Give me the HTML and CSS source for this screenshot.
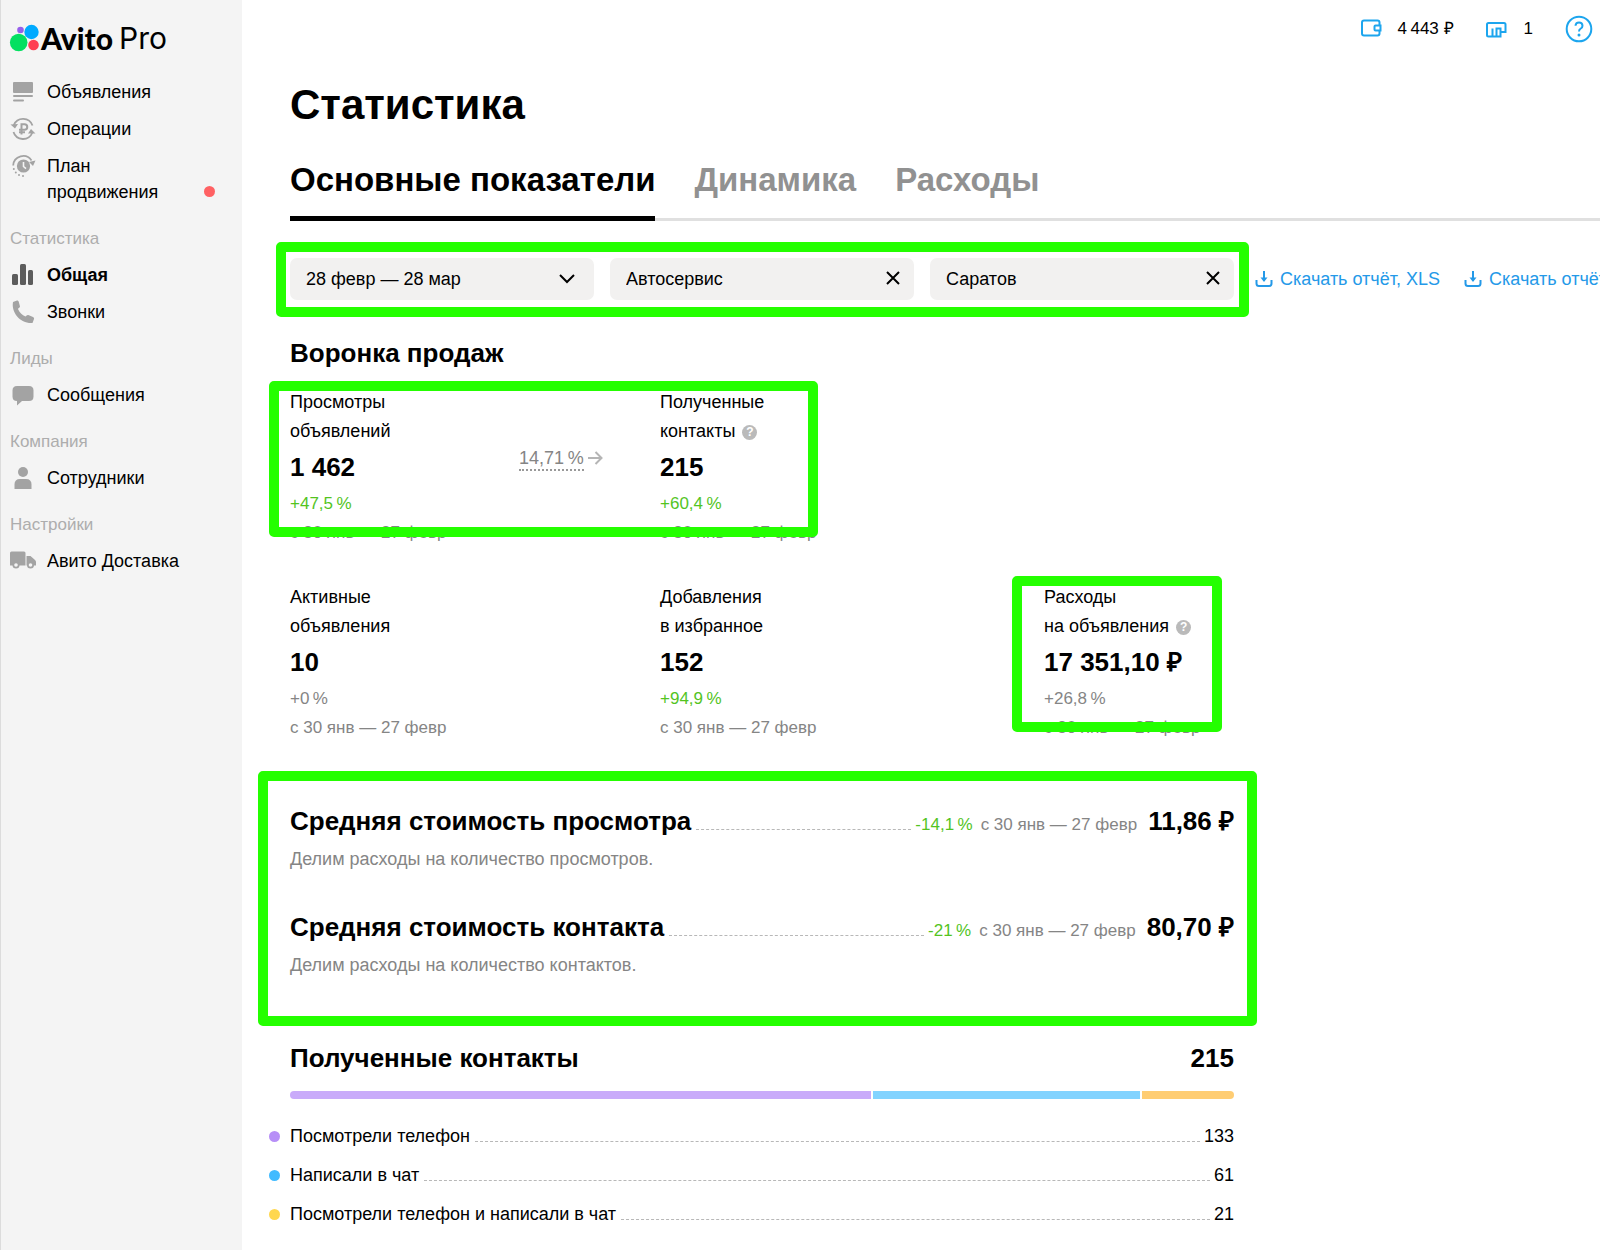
FILE: index.html
```html
<!DOCTYPE html>
<html lang="ru">
<head>
<meta charset="utf-8">
<meta name="viewport" content="width=device-width, initial-scale=1">
<title>Статистика — Avito Pro</title>
<link rel="stylesheet" href="styles.css">
</head>
<body>
<div class="layout">
  <aside class="sidebar">
    <a class="logo" href="#" aria-label="Avito Pro">
      <svg class="logo-mark" viewBox="0 0 30 28" aria-hidden="true">
        <circle cx="8.700" cy="18.500" r="8.800" fill="#04e061"/>
        <circle cx="10.500" cy="6" r="3.300" fill="#965eeb"/>
        <circle cx="21.500" cy="8" r="7.200" fill="#00aaff"/>
        <circle cx="23.500" cy="21" r="5.300" fill="#ff4053"/>
      </svg>
      <span class="logo-name">Avito</span>
      <span class="logo-pro">Pro</span>
    </a>
    <nav class="nav" aria-label="Основное меню">
      <a class="nav-item" href="#">
        <svg class="nav-icon" viewBox="0 0 26 26" aria-hidden="true"><rect x="3" y="3" width="20" height="11" rx="1"/><rect x="3" y="16" width="20" height="2" rx="1"/><rect x="3" y="20.500" width="11" height="2" rx="1"/></svg>
        <span>Объявления</span>
      </a>
      <a class="nav-item" href="#">
        <svg class="nav-icon" viewBox="0 0 26 26" aria-hidden="true"><g fill="none" stroke="currentColor" stroke-width="1.800"><path d="M3.800 9A10 10 0 0 1 22.500 9.500"/><path d="M22.200 17A10 10 0 0 1 3.500 16"/><path d="M11.500 18.500V8.300h3a2.700 2.700 0 0 1 0 5.500H9M9 16.200h6" stroke-width="2"/></g><path d="M.5 8.500l4.500 4 3-4.500zM25.500 17.500l-4.500-4.500-3 4.500z"/></svg>
        <span>Операции</span>
      </a>
      <a class="nav-item" href="#">
        <svg class="nav-icon" viewBox="0 0 26 26" aria-hidden="true"><path d="M3.200 12.500A10 10 0 0 1 21.500 7.500" fill="none" stroke="currentColor" stroke-width="1.800"/><path d="M19 9l6.500-1.500-2.500 5.500z"/><circle cx="13.500" cy="13" r="6.600"/><path d="M13.500 9v4.500l2.500 2.200" fill="none" stroke="#f4f4f4" stroke-width="1.600"/><circle cx="3.800" cy="16" r="1"/><circle cx="5.800" cy="19.500" r="1"/><circle cx="9" cy="22" r="1"/><circle cx="13" cy="23" r="1"/></svg>
        <span>План продвижения</span>
        <i class="nav-dot"></i>
      </a>
      <h2 class="nav-title">Статистика</h2>
      <a class="nav-item is-active" href="#" aria-current="page">
        <svg class="nav-icon" viewBox="0 0 26 26" aria-hidden="true"><rect x="2" y="12" width="6" height="11" rx="1.500"/><rect x="10" y="2" width="6" height="21" rx="1.500"/><rect x="18" y="8" width="5" height="15" rx="1.500"/></svg>
        <span>Общая</span>
      </a>
      <a class="nav-item" href="#">
        <svg class="nav-icon" viewBox="0 0 26 26" aria-hidden="true"><path d="M3 3l4-1.500c1 0 1.500.5 1.800 1.500l1.200 4.500c0 1-1.500 1.500-2 2.500 1.500 3.500 4 6 7.500 7.500 1-.8 1.500-1.800 2.800-1.500l4.700 2c1 .5 1.300 1.200 1 2L22.500 24C11 25 1 14 3 3z"/></svg>
        <span>Звонки</span>
      </a>
      <h2 class="nav-title">Лиды</h2>
      <a class="nav-item" href="#">
        <svg class="nav-icon" viewBox="0 0 26 26" aria-hidden="true"><path d="M7 4h12q4.500 0 4.500 4.500v6q0 4.500-4.500 4.500h-7l-5 4.500V19q-4.500 0-4.500-4.500v-6Q2.500 4 7 4z"/></svg>
        <span>Сообщения</span>
      </a>
      <h2 class="nav-title">Компания</h2>
      <a class="nav-item" href="#">
        <svg class="nav-icon" viewBox="0 0 26 26" aria-hidden="true"><circle cx="13" cy="7" r="5"/><path d="M4.500 24v-4.500q0-5.500 5.500-5.500h6q5.500 0 5.500 5.500V24z"/></svg>
        <span>Сотрудники</span>
      </a>
      <h2 class="nav-title">Настройки</h2>
      <a class="nav-item" href="#">
        <svg class="nav-icon" viewBox="0 0 26 26" aria-hidden="true"><path d="M0 5q0-1.500 1.500-1.500h12.500q1.500 0 1.500 1.500V17.500H0z"/><path d="M16.500 8h4L25 12q1 1 1 2v3.500h-9.500z"/><circle cx="6" cy="17" r="3.500"/><circle cx="20.500" cy="17" r="3.500"/><circle cx="6" cy="17" r="1.800" fill="#f4f4f4"/><circle cx="20.500" cy="17" r="1.800" fill="#f4f4f4"/></svg>
        <span>Авито Доставка</span>
      </a>
    </nav>
  </aside>

  <main class="main">
    <header class="topbar">
      <a class="balance" href="#">
        <svg class="top-icon" viewBox="0 0 22 20" aria-hidden="true"><path d="M19.500 6V3.500q0-2-2-2H4q-2 0-2 2v11q0 2 2 2h13.500q2 0 2-2V12M20.500 6.500h-5q-1 0-1 1v3q0 1 1 1h5z"/></svg>
        <span>4&#8201;443&nbsp;₽</span>
      </a>
      <a class="balance" href="#">
        <svg class="top-icon" viewBox="0 0 22 20" aria-hidden="true"><path d="M3.500 4h14.500q1.500 0 1.500 1.500V13h-5v4.500H2.500Q1 17.500 1 16V5.500Q1 4 2.500 4zM6.500 17V9.500M10.500 17V9.500h4V13"/></svg>
        <span>1</span>
      </a>
      <button class="help" type="button" aria-label="Помощь">
        <svg viewBox="0 0 28 28" aria-hidden="true"><circle cx="14" cy="14" r="12.300"/><path d="M10.500 10.800q.2-3.300 3.500-3.300t3.500 3.200q0 1.800-1.700 2.800-1.800 1-1.800 3"/><circle class="help-point" cx="14" cy="20" r="1.500"/></svg>
      </button>
    </header>

    <h1 class="page-title">Статистика</h1>

    <nav class="tabs" aria-label="Разделы статистики">
      <a class="tab is-active" href="#" aria-current="page">Основные показатели</a>
      <a class="tab" href="#">Динамика</a>
      <a class="tab" href="#">Расходы</a>
    </nav>

    <div class="toolbar">
      <div class="filters marked">
        <button class="filter" type="button">
          <span>28 февр — 28 мар</span>
          <svg class="filter-icon" viewBox="0 0 16 16" aria-hidden="true"><path d="M1 4l7 7 7-7"/></svg>
        </button>
        <div class="filter">
          <input class="filter-input" type="text" value="Автосервис" aria-label="Категория">
          <button class="clear" type="button" aria-label="Очистить категорию"><svg class="filter-icon" viewBox="0 0 16 16" aria-hidden="true"><path d="M2 1l12 12M14 1L2 13"/></svg></button>
        </div>
        <div class="filter">
          <input class="filter-input" type="text" value="Саратов" aria-label="Город">
          <button class="clear" type="button" aria-label="Очистить город"><svg class="filter-icon" viewBox="0 0 16 16" aria-hidden="true"><path d="M2 1l12 12M14 1L2 13"/></svg></button>
        </div>
      </div>
      <div class="downloads">
        <a class="download" href="#">
          <svg class="download-icon" viewBox="0 0 18 18" aria-hidden="true"><path d="M1.500 10v3.500q0 2.500 2.500 2.500h10q2.500 0 2.500-2.500V10M9 1v10"/><path class="download-tip" d="M5.500 7.500h7L9 12z"/></svg>
          <span>Скачать отчёт, XLS</span>
        </a>
        <a class="download" href="#">
          <svg class="download-icon" viewBox="0 0 18 18" aria-hidden="true"><path d="M1.500 10v3.500q0 2.500 2.500 2.500h10q2.500 0 2.500-2.500V10M9 1v10"/><path class="download-tip" d="M5.500 7.500h7L9 12z"/></svg>
          <span>Скачать отчёт</span>
        </a>
      </div>
    </div>

    <div class="content">
      <h2 class="section-title">Воронка продаж</h2>
      <div class="funnel">
        <div class="funnel-top marked">
          <section class="metric">
            <h3 class="metric-label">Просмотры<br>объявлений</h3>
            <p class="metric-value">1 462</p>
            <p class="metric-note up">+47,5&#8201;%</p>
            <p class="metric-note">с 30 янв — 27 февр</p>
          </section>
          <div class="conversion">
            <span class="conversion-rate">14,71&#8201;%</span>
            <svg class="conversion-arrow" viewBox="0 0 16 16" aria-hidden="true"><path d="M0 7h14M7.500 1l6 6-6 6"/></svg>
          </div>
          <section class="metric">
            <h3 class="metric-label">Полученные<br>контакты <button class="hint" type="button" aria-label="Подсказка">?</button></h3>
            <p class="metric-value">215</p>
            <p class="metric-note up">+60,4&#8201;%</p>
            <p class="metric-note">с 30 янв — 27 февр</p>
          </section>
        </div>
        <div class="funnel-bottom">
          <section class="metric">
            <h3 class="metric-label">Активные<br>объявления</h3>
            <p class="metric-value">10</p>
            <p class="metric-note">+0&#8201;%</p>
            <p class="metric-note">с 30 янв — 27 февр</p>
          </section>
          <section class="metric">
            <h3 class="metric-label">Добавления<br>в избранное</h3>
            <p class="metric-value">152</p>
            <p class="metric-note up">+94,9&#8201;%</p>
            <p class="metric-note">с 30 янв — 27 февр</p>
          </section>
          <section class="metric spend marked">
            <h3 class="metric-label">Расходы<br>на объявления <button class="hint" type="button" aria-label="Подсказка">?</button></h3>
            <p class="metric-value">17 351,10 ₽</p>
            <p class="metric-note">+26,8&#8201;%</p>
            <p class="metric-note">с 30 янв — 27 февр</p>
          </section>
        </div>
      </div>

      <div class="costs marked">
        <section class="cost">
          <div class="cost-row">
            <h2 class="cost-title">Средняя стоимость просмотра</h2>
            <span class="leader"></span>
            <span class="cost-delta up">-14,1&#8201;%</span>
            <span class="cost-period">с 30 янв — 27 февр</span>
            <strong class="cost-value">11,86 ₽</strong>
          </div>
          <p class="cost-note">Делим расходы на количество просмотров.</p>
        </section>
        <section class="cost">
          <div class="cost-row">
            <h2 class="cost-title">Средняя стоимость контакта</h2>
            <span class="leader"></span>
            <span class="cost-delta up">-21&#8201;%</span>
            <span class="cost-period">с 30 янв — 27 февр</span>
            <strong class="cost-value">80,70 ₽</strong>
          </div>
          <p class="cost-note">Делим расходы на количество контактов.</p>
        </section>
      </div>

      <section class="contacts">
        <div class="contacts-head">
          <h2 class="cost-title">Полученные контакты</h2>
          <strong class="cost-value">215</strong>
        </div>
        <div class="bar">
          <span class="bar-part bar-phone" style="flex-grow: 133"></span>
          <span class="bar-part bar-chat" style="flex-grow: 61"></span>
          <span class="bar-part bar-both" style="flex-grow: 21"></span>
        </div>
        <dl class="legend">
          <div class="legend-row phone"><dt>Посмотрели телефон</dt><dd class="leader"></dd><dd>133</dd></div>
          <div class="legend-row chat"><dt>Написали в чат</dt><dd class="leader"></dd><dd>61</dd></div>
          <div class="legend-row both"><dt>Посмотрели телефон и написали в чат</dt><dd class="leader"></dd><dd>21</dd></div>
        </dl>
      </section>
    </div>
  </main>
</div>
</body>
</html>
```
FILE: styles.css
```css
* {
  box-sizing: border-box;
}

body,
h1,
h2,
h3,
p,
dl,
dd {
  margin: 0;
}

body {
  background: #fff;
  color: #000;
  font-family: "Liberation Sans", Arial, sans-serif;
  font-size: 18px;
  line-height: 26px;
}

a {
  color: inherit;
  text-decoration: none;
}

button,
input {
  padding: 0;
  border: 0;
  background: none;
  color: inherit;
  font: inherit;
}

svg {
  display: block;
  flex: none;
}

.layout {
  display: grid;
  grid-template-columns: 242px minmax(0, 1fr);
  min-height: 100vh;
}

/* Sidebar */

.sidebar {
  padding: 20px 32px 24px 9px;
  border-left: 1px solid #dcdcdc;
  background: #f4f4f4;
}

.logo {
  display: flex;
  align-items: center;
  height: 36px;
  font-family: Lato, sans-serif;
  font-size: 30px;
  white-space: nowrap;
}

.logo-mark {
  width: 30px;
  height: 28px;
  margin-right: 1px;
  overflow: visible;
}

.logo-name {
  margin-right: 6px;
  font-weight: 900;
}

.logo-pro {
  font-family: Inter, sans-serif;
}

.nav {
  padding-top: 18px;
}

.nav-item {
  display: flex;
  gap: 11px;
  padding: 5px 0 6px;
}

.nav-item span {
  flex: 1;
}

.nav-icon {
  width: 26px;
  height: 26px;
  color: #a3a3a3;
  fill: currentColor;
}

.nav-dot {
  align-self: flex-end;
  width: 11px;
  height: 11px;
  margin: 0 -5px 8px 0;
  border-radius: 50%;
  background: #ff6163;
}

.nav-title {
  margin: 16px 0 6px;
  color: #adadad;
  font-size: 17px;
  font-weight: 400;
  line-height: 24px;
}

.nav-item.is-active {
  font-weight: 700;
}

.nav-item.is-active .nav-icon {
  color: #5c5c5c;
}

/* Top bar */

.main {
  overflow: hidden;
  padding: 14px 0 22px 48px;
}

.topbar {
  display: flex;
  align-items: center;
  justify-content: flex-end;
  gap: 32px;
  height: 30px;
  padding-right: 7px;
  font-size: 17px;
}

.balance {
  display: flex;
  align-items: center;
  gap: 16px;
}

.top-icon {
  width: 22px;
  height: 20px;
  fill: none;
  stroke: #1ca5ee;
  stroke-width: 2;
}

.help svg {
  width: 28px;
  height: 28px;
  fill: none;
  stroke: #1ca5ee;
  stroke-width: 2;
}

.help .help-point {
  fill: #1ca5ee;
  stroke: none;
}

/* Heading and tabs */

.page-title {
  margin-top: 37px;
  font-size: 42px;
  line-height: 48px;
}

.tabs {
  display: flex;
  gap: 39px;
  margin-top: 25px;
  box-shadow: inset 0 -3px #e0e0e0;
}

.tab {
  padding: 6px 0 16px;
  border-bottom: 5px solid transparent;
  color: #919191;
  font-size: 33px;
  font-weight: 700;
  line-height: 40px;
  white-space: nowrap;
}

.tab.is-active {
  border-color: #000;
  color: #000;
}

/* Green frames drawn over the blocks they mark */

.marked {
  position: relative;
}

.marked::after {
  content: "";
  position: absolute;
  border: 10px solid #24ff00;
  border-radius: 5px;
  pointer-events: none;
}

.filters::after {
  inset: -16px -15px -17px -14px;
}

.funnel-top::after {
  inset: -7px 0 10px -21px;
}

.spend::after {
  inset: -7px 12px 10px -32px;
}

.costs::after {
  inset: -32px -23px -48px -32px;
}

/* Filters */

.toolbar {
  display: flex;
  align-items: center;
  gap: 21px;
  margin-top: 37px;
}

.filters {
  display: flex;
  flex: none;
  gap: 16px;
}

.filter {
  display: flex;
  align-items: center;
  justify-content: space-between;
  width: 304px;
  height: 42px;
  padding: 0 13px 0 16px;
  border-radius: 7px;
  background: #f2f1f0;
}

button.filter {
  padding-right: 19px;
}

.filter-input {
  min-width: 0;
  flex: 1;
}

.filter-icon {
  width: 16px;
  height: 16px;
  fill: none;
  stroke: #000;
  stroke-width: 2;
}

.downloads {
  display: flex;
  gap: 24px;
  color: #2499e8;
}

.download {
  display: flex;
  align-items: center;
  gap: 7px;
  white-space: nowrap;
}

.download-icon {
  width: 18px;
  height: 18px;
  fill: none;
  stroke: currentColor;
  stroke-width: 2;
}

.download-tip {
  fill: currentColor;
  stroke: none;
}

/* Funnel */

.content {
  max-width: 944px;
}

.section-title {
  margin-top: 35px;
  font-size: 26px;
  line-height: 36px;
}

.funnel {
  display: grid;
  gap: 36px;
  margin-top: 17px;
}

.funnel-top {
  display: grid;
  grid-template-columns: 229px 141px 158px;
  justify-self: start;
}

.funnel-bottom {
  display: grid;
  grid-template-columns: 370px 384px 190px;
}

.metric {
  line-height: 29px;
  white-space: nowrap;
}

.metric-label {
  font-size: 18px;
  font-weight: 400;
}

.metric-value {
  font-size: 26px;
  font-weight: 700;
  line-height: 43px;
}

.metric-note {
  color: #858585;
  font-size: 17px;
}

.metric .up,
.cost .up {
  color: #53c41f;
}

.hint {
  width: 15px;
  height: 15px;
  margin-left: 2px;
  border-radius: 50%;
  background: #bababa;
  color: #fff;
  font-size: 12px;
  font-weight: 700;
  line-height: 15px;
  text-align: center;
  vertical-align: 1px;
}

.conversion {
  display: flex;
  align-items: center;
  align-self: start;
  gap: 4px;
  padding-top: 59px;
  color: #858585;
}

.conversion-rate {
  border-bottom: 2px dotted #999;
  line-height: 22px;
}

.conversion-arrow {
  width: 16px;
  height: 16px;
  fill: none;
  stroke: #b5b5b5;
  stroke-width: 2;
}

/* Average costs */

.costs {
  display: grid;
  gap: 37px;
  margin-top: 61px;
}

.cost-row {
  display: flex;
  align-items: baseline;
  white-space: nowrap;
}

.cost-title,
.cost-value {
  font-size: 26px;
  font-weight: 700;
  line-height: 36px;
}

.leader {
  flex: 1;
  margin: 0 4px 0 5px;
  border-bottom: 1px dashed #b8b8b8;
}

.cost-delta {
  margin-right: 8px;
  font-size: 17px;
}

.cost-period {
  margin-right: 11px;
  color: #858585;
  font-size: 17px;
}

.cost-note {
  margin-top: 7px;
  color: #858585;
}

/* Received contacts */

.contacts {
  margin-top: 62px;
}

.contacts-head {
  display: flex;
  justify-content: space-between;
}

.bar {
  display: flex;
  gap: 2px;
  height: 8px;
  margin-top: 15px;
  overflow: hidden;
  border-radius: 4px;
}

.bar-part {
  flex-basis: 0;
}

.bar-phone {
  background: #c9abfa;
}

.bar-chat {
  background: #82d3ff;
}

.bar-both {
  background: #ffcd73;
}

.legend {
  display: grid;
  gap: 13px;
  margin-top: 24px;
}

.legend-row {
  display: flex;
  align-items: baseline;
  margin-left: -21px;
}

.legend-row::before {
  content: "";
  width: 11px;
  height: 11px;
  margin-right: 10px;
  border-radius: 50%;
}

.legend-row.phone::before {
  background: #b78ff7;
}

.legend-row.chat::before {
  background: #42bbff;
}

.legend-row.both::before {
  background: #ffd74f;
}
```
